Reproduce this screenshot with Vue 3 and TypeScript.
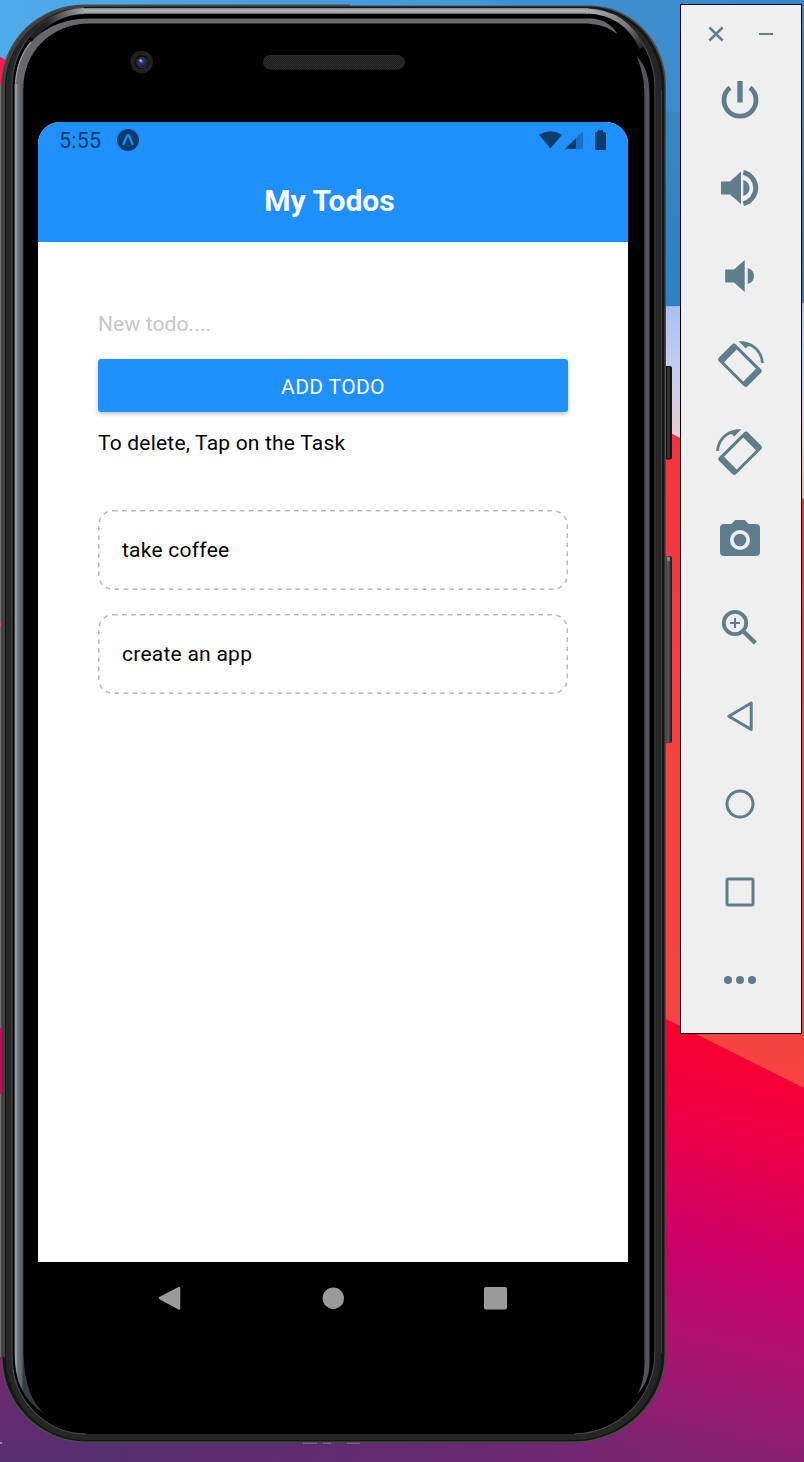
<script setup lang="ts">
import { ref } from 'vue'

interface Todo {
  key: number
  text: string
}

const todos = ref<Todo[]>([
  { key: 1, text: 'take coffee' },
  { key: 2, text: 'create an app' },
])

function removeTodo(key: number) {
  todos.value = todos.value.filter((t) => t.key !== key)
}
</script>

<template>
  <main class="desktop">
    <svg class="wallpaper" viewBox="0 0 804 1462" aria-hidden="true">
      <defs>
        <linearGradient id="sky" x1="0" y1="0" x2="1" y2="0">
          <stop offset="0" stop-color="#50abea" />
          <stop offset="0.6" stop-color="#4397d7" />
          <stop offset="1" stop-color="#3585c8" />
        </linearGradient>
        <linearGradient id="deep" x1="0" y1="0" x2="0" y2="1">
          <stop offset="0" stop-color="#3a86c4" />
          <stop offset="1" stop-color="#2a80c4" />
        </linearGradient>
        <linearGradient id="mist" x1="0" y1="0" x2="0" y2="1">
          <stop offset="0" stop-color="#aabff0" />
          <stop offset="0.3" stop-color="#c2cdf0" />
          <stop offset="0.6" stop-color="#e8ccd2" />
          <stop offset="1" stop-color="#f4a88c" />
        </linearGradient>
        <linearGradient id="coral" x1="0" y1="0" x2="0" y2="1">
          <stop offset="0" stop-color="#f5303f" />
          <stop offset="0.5" stop-color="#f8423e" />
          <stop offset="1" stop-color="#f54540" />
        </linearGradient>
        <linearGradient id="dusk" gradientUnits="userSpaceOnUse" x1="800" y1="1040" x2="690" y2="1500">
          <stop offset="0" stop-color="#fa002c" />
          <stop offset="0.22" stop-color="#ee0044" />
          <stop offset="0.48" stop-color="#cb0068" />
          <stop offset="0.66" stop-color="#b01270" />
          <stop offset="1" stop-color="#702772" />
        </linearGradient>
        <linearGradient id="floor" x1="0" y1="0" x2="1" y2="0">
          <stop offset="0" stop-color="#552f70" />
          <stop offset="0.6" stop-color="#682870" />
          <stop offset="1" stop-color="#7c2470" stop-opacity="0" />
        </linearGradient>
        <linearGradient id="corner" x1="0" y1="0" x2="0" y2="1">
          <stop offset="0" stop-color="#802470" />
          <stop offset="1" stop-color="#552f70" />
        </linearGradient>
      </defs>
      <rect width="804" height="320" fill="url(#sky)" />
      <path d="M480 0H804V30L660 31Z" fill="#3a8ccd" opacity=".4" />
      <path d="M640 109L804 122V320H640Z" fill="url(#deep)" />
      <path d="M640 307L804 303V520H640Z" fill="url(#mist)" />
      <path d="M640 418L804 499V1100H640Z" fill="url(#coral)" />
      <path d="M640 1006L804 1088V1462H400V1340H640Z" fill="url(#dusk)" />
      <rect y="1330" width="200" height="132" fill="url(#corner)" />
      <rect x="100" y="1430" width="640" height="32" fill="url(#floor)" />
      <path d="M0 57Q9 60 12 70V90H0Z" fill="#f81c50" />
      <rect y="84" width="3" height="1273" fill="#6f6f70" />
      <rect y="623" width="2" height="3" fill="#ff4a3c" />
      <rect y="1028" width="2" height="66" fill="#d6005c" />
      <rect y="1442" width="2" height="2" fill="#8b8b8b" />
    </svg>

    <section class="phone">
      <svg class="shell" viewBox="0 0 680 1462" aria-hidden="true">
        <defs>
          <linearGradient id="sideL" gradientUnits="userSpaceOnUse" x1="14.5" y1="0" x2="23.5" y2="0">
            <stop offset="0" stop-color="#77777a" />
            <stop offset="0.16" stop-color="#a8a6a8" />
            <stop offset="0.36" stop-color="#707279" />
            <stop offset="0.8" stop-color="#5b626c" />
            <stop offset="1" stop-color="#363a41" />
          </linearGradient>
          <linearGradient id="topBand" x1="0" y1="0" x2="0" y2="1">
            <stop offset="0" stop-color="#777a7d" />
            <stop offset="0.35" stop-color="#b5b8bb" />
            <stop offset="0.75" stop-color="#a4a7aa" />
            <stop offset="1" stop-color="#4b4d50" />
          </linearGradient>
          <linearGradient id="cornerL" gradientUnits="userSpaceOnUse" x1="46" y1="26" x2="86" y2="10">
            <stop offset="0" stop-color="#202122" />
            <stop offset="1" stop-color="#a6a9ac" />
          </linearGradient>
          <linearGradient id="cornerR" gradientUnits="userSpaceOnUse" x1="590" y1="10" x2="642" y2="50">
            <stop offset="0" stop-color="#a6a9ac" />
            <stop offset="0.6" stop-color="#77797b" />
            <stop offset="1" stop-color="#202122" />
          </linearGradient>
          <linearGradient id="key" x1="0" y1="0" x2="1" y2="0">
            <stop offset="0" stop-color="#222" />
            <stop offset="0.5" stop-color="#5a5b5b" />
            <stop offset="1" stop-color="#181818" />
          </linearGradient>
          <radialGradient id="lens" cx=".45" cy=".4" r=".6">
            <stop offset="0" stop-color="#7886b8" />
            <stop offset="0.3" stop-color="#2c3a70" />
            <stop offset="1" stop-color="#101630" />
          </radialGradient>
          <pattern id="mesh" width="2" height="2" patternUnits="userSpaceOnUse">
            <rect width="2" height="2" fill="#1b1c1c" />
            <rect width="1" height="1" fill="#303232" />
            <rect x="1" y="1" width="1" height="1" fill="#2b2d2d" />
          </pattern>
        </defs>

        <rect x="664" y="366" width="8" height="93.500" rx="2" fill="#171717" />
        <rect x="667" y="367" width="3" height="91" rx="1" fill="#303030" />
        <rect x="664" y="556" width="8" height="187" rx="2" fill="url(#key)" />
        <rect x="667" y="557" width="3" height="4" rx="1" fill="#888" />

        <path d="M84 4.500H350V5.500H590A76 80 0 0 1 666 84V1353A92 90 0 0 1 574 1443H86A85 86 0 0 1 1 1357V86A83 81.500 0 0 1 84 4.500Z" fill="#4a4a4a" />
        <path d="M84 6.500H588A76 80 0 0 1 664.500 86V1353A91 88 0 0 1 574 1441.500H86A84 85 0 0 1 2.500 1357V88A81 81 0 0 1 84 6.500Z" fill="#161616" />
        <path d="M3.700 1357V88A80 80 0 0 1 84 7.500" fill="none" stroke="#434343" stroke-width="2.500" />
        <path d="M84 8H586A75 79 0 0 1 661.500 88V1353A88 87 0 0 1 574 1440H86A80 83 0 0 1 6 1357V88A77 79 0 0 1 84 8Z" fill="#262626" />
        <path d="M661.500 90V1353" stroke="#3b3b3b" stroke-width="1" />
        <path d="M84 9H585A70 80 0 0 1 655.500 90V1353A82 81 0 0 1 574 1434H86A74 77 0 0 1 12 1357V88A73 78 0 0 1 84 9Z" fill="#000" />
        <path d="M86 1434A74 77 0 0 1 12 1357V88A73 78 0 0 1 84 9M585 9A70 80 0 0 1 655 90V1353A82 81 0 0 1 574 1434" fill="none" stroke="#484848" stroke-width="1.200" />

        <rect x="82" y="8" width="506" height="6" fill="url(#topBand)" />
        <path d="M84 11A69 76 0 0 0 32 38" fill="none" stroke="url(#cornerL)" stroke-width="6" />
        <path d="M587 11C615 12 632 26 642 48" fill="none" stroke="url(#cornerR)" stroke-width="5" />

        <path d="M15 88C15 48 43 18.500 90 18.500H590C603 18.500 612 25 617.500 34C608 27 600 23.500 580 23.500H90C51 23.500 23.500 52 23.500 88Z" fill="#68676c" />
        <path d="M14.500 84H23.500V1350C24 1385 32 1403 46 1415C25 1401 14.500 1385 14.500 1350Z" fill="url(#sideL)" />
        <path d="M15.500 88C15.500 70 21 54 31 42" fill="none" stroke="#9b9b9e" stroke-width="1.200" />
        <path d="M636.500 56C646 66 649.500 78 649.500 96V1362C649.500 1378 644 1387 637.500 1394C641 1387 644.500 1378 644.500 1362V96C644.500 80 641.500 68 636.500 56Z" fill="#55545a" />
        <path d="M645 96V1362" stroke="#3a393e" />

        <circle cx="141.700" cy="62" r="11.200" fill="#212223" />
        <circle cx="141.700" cy="62" r="7" fill="#0a0b10" />
        <circle cx="142" cy="62.500" r="5.300" fill="url(#lens)" stroke="#343b54" stroke-width=".8" />
        <circle cx="140.500" cy="60.500" r="1.200" fill="#a6b3dc" />
        <rect x="263.500" y="55.500" width="141" height="13.500" rx="6.750" fill="url(#mesh)" stroke="#2a2b2b" />
        <path d="M303 1443.300H317M323 1443.300H331M347 1443.300H360" stroke="#8b7390" />
      </svg>

      <div class="screen">
        <div class="status">
          <span class="clock">5:55</span>
          <svg class="expo" viewBox="0 0 22 22" aria-hidden="true">
            <circle cx="11" cy="11" r="11" fill="#0d3c6b" />
            <path d="M6.500 15.200L9.800 7.300Q11 5.400 12.200 7.300L15.500 15.200" fill="none" stroke="#1f90ff" stroke-width="2.200" stroke-linecap="round" />
          </svg>
          <svg class="signals" viewBox="0 0 70 22" aria-hidden="true">
            <path d="M1 4.800Q12.500-2.200 24 4.800L12.500 18.500Z" fill="#0d3c6b" />
            <path d="M45 1V19H27Z" fill="#1a70c6" />
            <path d="M38 8V19H27Z" fill="#0d3c6b" />
            <path d="M59.500 0.200H65V2H66.500Q68 2 68 3.500V18.500Q68 20 66.500 20H58.500Q57 20 57 18.500V3.500Q57 2 58.500 2H59.500Z" fill="#0d3c6b" />
          </svg>
        </div>
        <h1 class="title">My Todos</h1>
        <div class="content">
          <div class="field">New todo....</div>
          <button class="add" type="button">ADD TODO</button>
          <p class="hint">To delete, Tap on the Task</p>
          <ul class="list">
            <li v-for="todo in todos" :key="todo.key" class="item" @click="removeTodo(todo.key)">
              <svg class="dash" viewBox="0 0 470 80" aria-hidden="true">
                <rect x=".75" y=".75" width="468.500" height="78.500" rx="14.250" />
              </svg>
              <span>{{ todo.text }}</span>
            </li>
          </ul>
        </div>
      </div>

      <nav class="softkeys">
        <svg viewBox="0 0 24 24"><path d="M22 2V22.500L3 12.200Z" stroke-width="2.500" stroke-linejoin="round" /></svg>
        <svg viewBox="0 0 24 24"><circle cx="12.300" cy="12.200" r="10.700" /></svg>
        <svg viewBox="0 0 24 24"><rect x="0" y="1" width="23" height="22.500" rx="2" /></svg>
      </nav>
    </section>

    <aside class="toolbar">
      <div class="window-keys">
        <svg viewBox="0 0 16 16"><path d="M1.500 1.500L14.500 14.500M14.500 1.500L1.500 14.500" stroke-width="2.500" /></svg>
        <svg viewBox="0 0 16 16"><path d="M1 8H15" stroke-width="2" /></svg>
      </div>
      <svg class="tool" viewBox="0 0 60 60">
        <path class="line" d="M20 17.700A16 16 0 1 0 40 17.700" stroke-width="4.800" />
        <path d="M27.300 11H32.700V32.500H27.300Z" />
      </svg>
      <svg class="tool" viewBox="0 0 60 60">
        <path d="M11 23.500H20L31 13.500V46L20 36.500H11ZM33.300 22Q39.500 24 39.500 30T33.300 38Z" />
        <path class="line" d="M33.300 14.400A16 16 0 0 1 33.300 45.600" stroke-width="4.800" />
      </svg>
      <svg class="tool" viewBox="0 0 60 60">
        <path d="M15.200 23.500H24L34.700 14V46L24 36.500H15.200ZM37.700 22Q44 24 44 30T37.700 38Z" />
      </svg>
      <svg v-for="side in ['right', 'left']" :key="side" class="tool" :class="side" viewBox="0 0 60 60">
        <path fill-rule="evenodd" d="M22 10.500Q24 8.500 26 10.500L50.800 35Q52.800 37 50.800 39L37.700 52.100Q35.700 54.100 33.700 52.100L9 27.600Q7 25.600 9 23.600ZM26.700 15.500L14 28.200L33.300 47.500L46 34.800Z" />
        <path d="M28.700 7.300C42 6 53 16 53.800 29H51C50.500 21 46 14.500 38.500 12L35.700 14.600Z" />
      </svg>
      <svg class="tool" viewBox="0 0 60 60">
        <path fill-rule="evenodd" d="M14 14H21.500L25.200 10H34.800L38.500 14H46Q50 14 50 18V42Q50 46 46 46H14Q10 46 10 42V18Q10 14 14 14ZM30 20A10 10 0 1 0 30 40A10 10 0 1 0 30 20Z" />
        <circle cx="30" cy="30" r="6.300" />
      </svg>
      <svg class="tool" viewBox="0 0 60 60">
        <circle class="line" cx="25" cy="25" r="11.200" stroke-width="3.800" />
        <path class="line" d="M25 20V30M20 25H30" stroke-width="2" />
        <path class="line" d="M34 34L45.300 45" stroke-width="4.500" />
      </svg>
      <svg class="tool" viewBox="0 0 60 60">
        <path class="line" d="M18.800 30.200L41.200 17V43.500Z" stroke-width="3" stroke-linejoin="round" />
      </svg>
      <svg class="tool" viewBox="0 0 60 60"><circle class="line" cx="30" cy="30" r="13" stroke-width="3" /></svg>
      <svg class="tool" viewBox="0 0 60 60"><rect class="line" x="17" y="17" width="26" height="26" rx="1.500" stroke-width="3" /></svg>
      <svg class="tool" viewBox="0 0 60 60">
        <circle cx="18" cy="30" r="4" /><circle cx="30" cy="30" r="4" /><circle cx="42" cy="30" r="4" />
      </svg>
    </aside>
  </main>
</template>

<style>
html,
body {
  margin: 0;
}
</style>

<style scoped>
* {
  box-sizing: border-box;
}

svg {
  display: block;
}

.desktop {
  position: relative;
  display: flex;
  align-items: flex-start;
  gap: 12px;
  width: 804px;
  height: 1462px;
  overflow: hidden;
  font-family: Roboto, "Liberation Sans", sans-serif;
}

.wallpaper {
  position: absolute;
  inset: 0;
  width: 804px;
  height: 1462px;
}

.phone {
  position: relative;
  width: 668px;
  height: 1462px;
  padding: 122px 40px 0 38px;
}

.shell {
  position: absolute;
  inset: 0;
  width: 680px;
  height: 1462px;
}

.screen {
  position: relative;
  height: 1140px;
  overflow: hidden;
  border-radius: 22px 22px 0 0;
  background: #fff;
}

.status {
  display: flex;
  align-items: center;
  height: 36px;
  padding: 0 20px 0 21px;
  background: #1f90ff;
  color: #0d3c6b;
}

.clock {
  width: 58px;
  font-size: 21.5px;
  letter-spacing: 0.2px;
  padding-top: 1px;
}

.expo {
  width: 22px;
  height: 22px;
}

.signals {
  width: 70px;
  height: 22px;
  margin-left: auto;
  margin-top: 2px;
}

.title {
  height: 84px;
  margin: 0;
  padding: 25px 7px 0 0;
  background: #1f90ff;
  color: #fff;
  font-size: 30px;
  font-weight: 700;
  line-height: 35px;
  text-align: center;
}

.content {
  padding: 60px;
}

.field {
  height: 57px;
  padding-top: 9px;
  color: #c7c7c7;
  font-size: 21px;
  line-height: 26px;
  letter-spacing: 0.13px;
}

.add {
  display: block;
  width: 100%;
  height: 53px;
  padding: 2px 0 0;
  border: 0;
  border-radius: 3px;
  background: #1f90ff;
  box-shadow: 0 2px 4px rgba(0, 0, 0, 0.25);
  color: #fff;
  font: 400 21px Roboto, "Liberation Sans", sans-serif;
  letter-spacing: 0.35px;
}

.hint {
  margin: 18px 0 0;
  font-size: 21px;
  line-height: 26px;
  letter-spacing: 0.2px;
}

.list {
  display: flex;
  flex-direction: column;
  gap: 24px;
  margin: 54px 0 0;
  padding: 0;
  list-style: none;
}

.item {
  position: relative;
  display: flex;
  align-items: center;
  height: 80px;
  padding: 0 24px 1px;
  font-size: 21px;
  letter-spacing: 0.25px;
}

.dash {
  position: absolute;
  inset: 0;
  width: 470px;
  height: 80px;
  fill: none;
  stroke: #bbb;
  stroke-width: 1.5;
  stroke-dasharray: 4.7 4.35;
}

.softkeys {
  position: relative;
  display: flex;
  justify-content: space-between;
  padding: 24px 120px 0 119px;
}

.softkeys svg {
  width: 24px;
  height: 24px;
  fill: #9a9a9a;
  stroke: #9a9a9a;
  stroke-width: 0;
}

.toolbar {
  position: relative;
  display: flex;
  flex-direction: column;
  align-items: center;
  width: 122px;
  height: 1030px;
  margin-top: 4px;
  padding-right: 2px;
  border: 1px solid #000;
  background: #efefef;
  fill: #607d8b;
}

.window-keys {
  display: flex;
  flex: none;
  gap: 34px;
  height: 65px;
  padding-top: 21px;
  padding-left: 2px;
}

.window-keys svg {
  width: 16px;
  height: 16px;
  stroke: #607d8b;
}

.tool {
  flex: none;
  width: 60px;
  height: 60px;
  margin-bottom: 28px;
}

.tool.left {
  transform: scaleX(-1);
}

.line {
  fill: none;
  stroke: #607d8b;
}
</style>
